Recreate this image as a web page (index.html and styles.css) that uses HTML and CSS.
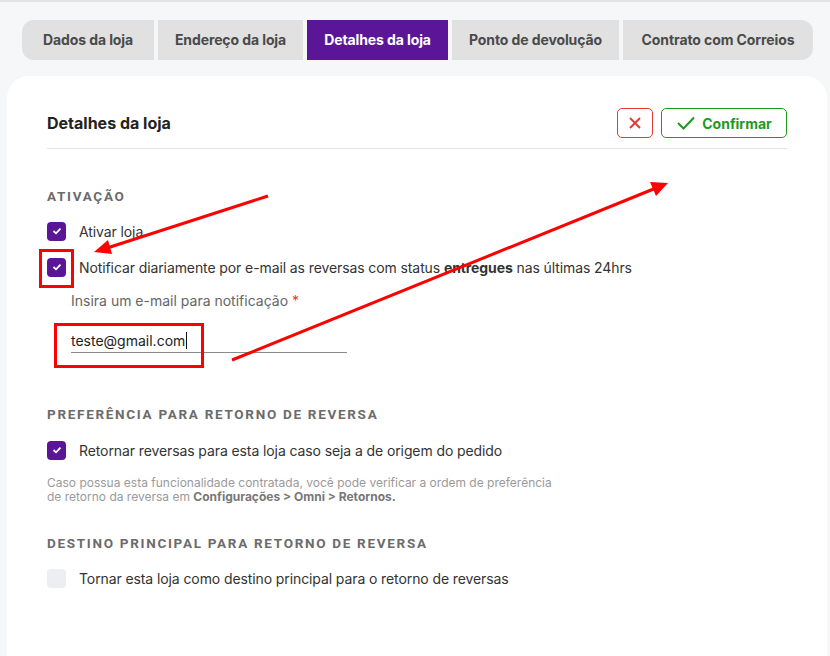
FILE: index.html
```html
<!DOCTYPE html>
<html lang="pt-BR">
<head>
    <meta charset="UTF-8">
    <meta name="viewport" content="width=device-width, initial-scale=1.0">
    <title>Detalhes da loja</title>
    <link rel="stylesheet" href="styles.css">
</head>
<body>
<div class="page">
    <!-- abas -->
    <div class="tabs">
        <div class="tab first">Dados da loja</div>
        <div class="tab">Endereço da loja</div>
        <div class="tab active">Detalhes da loja</div>
        <div class="tab">Ponto de devolução</div>
        <div class="tab last">Contrato com Correios</div>
    </div>

    <!-- card -->
    <div class="card">
        <div class="card-header">
            <h3>Detalhes da loja</h3>
            <div class="actions">
                <button class="btn-cancel">
                    <svg width="14" height="14" viewBox="0 0 14 14"><path d="M2 2 L12 12 M12 2 L2 12" stroke="#e53935" stroke-width="2" fill="none"/></svg>
                </button>
                <button class="btn-confirm">
                    <svg width="20" height="16" viewBox="0 0 20 16"><path d="M2 8 L7.5 13.5 L18 2.5" stroke="#1e9a1e" stroke-width="2" fill="none"/></svg>
                    Confirmar
                </button>
            </div>
        </div>

        <div class="section first">
            <h4>Ativação</h4>
            <label class="check-row">
                <span class="box checked"><svg width="10" height="8" viewBox="0 0 10 8"><path d="M1.5 4 L4 6.3 L8.5 1.7" stroke="#fff" stroke-width="1.8" fill="none"/></svg></span>
                Ativar loja
            </label>
            <label class="check-row">
                <span class="box checked"><svg width="10" height="8" viewBox="0 0 10 8"><path d="M1.5 4 L4 6.3 L8.5 1.7" stroke="#fff" stroke-width="1.8" fill="none"/></svg></span>
                <span>Notificar diariamente por e-mail as reversas com status <b>entregues</b> nas últimas 24hrs</span>
            </label>
            <div class="field">
                <div class="field-label">Insira um e-mail para notificação <span class="req">*</span></div>
                <div class="field-input"><span>teste@gmail.com</span><span class="caret"></span></div>
            </div>
        </div>

        <div class="section second">
            <h4>Preferência para retorno de reversa</h4>
            <label class="check-row">
                <span class="box checked"><svg width="10" height="8" viewBox="0 0 10 8"><path d="M1.5 4 L4 6.3 L8.5 1.7" stroke="#fff" stroke-width="1.8" fill="none"/></svg></span>
                Retornar reversas para esta loja caso seja a de origem do pedido
            </label>
            <p class="hint">Caso possua esta funcionalidade contratada, você pode verificar a ordem de preferência<br>de retorno da reversa em <b>Configurações &gt; Omni &gt; Retornos.</b></p>
        </div>

        <div class="section last">
            <h4>Destino principal para retorno de reversa</h4>
            <label class="check-row">
                <span class="box"></span>
                Tornar esta loja como destino principal para o retorno de reversas
            </label>
        </div>
    </div>

    <!-- marcações em vermelho -->
    <div class="mark mark-check"></div>
    <div class="mark mark-input"></div>
    <svg class="arrows" width="830" height="656" viewBox="0 0 830 656">
        <line x1="268" y1="194" x2="104" y2="247" stroke="#f00" stroke-width="3"/>
        <polygon points="94,250 108,238 112,252" fill="#f00"/>
        <line x1="232" y1="358" x2="656" y2="186" stroke="#f00" stroke-width="3"/>
        <polygon points="668,181 650,180 656,194" fill="#f00"/>
    </svg>
</div>
</body>
</html>
```

FILE: styles.css
```css
body {
    margin: 0;
    background: #f6f7f9;
    font-family: "Inter", "DejaVu Sans", sans-serif;
    color: #333;
}

.page {
    position: relative;
    width: 830px;
    height: 656px;
    overflow: hidden;
    border-top: 2px solid #e3e4e6;
    box-sizing: border-box;
}

/* abas */
.tabs {
    display: flex;
    gap: 4px;
    padding: 18px 0 0 22px;
}

.tab {
    height: 40px;
    line-height: 40px;
    text-align: center;
    white-space: nowrap;
    background: #e1e1e1;
    color: #4a4a4a;
    font-size: 14px;
    font-weight: 700;
    letter-spacing: -0.1px;
}

.tab:nth-child(1) { width: 132px; }
.tab:nth-child(2) { width: 145px; }
.tab:nth-child(3) { width: 141px; }
.tab:nth-child(4) { width: 167px; }
.tab:nth-child(5) { width: 190px; }

.tab.first {
    border-radius: 12px 0 0 12px;
}

.tab.last {
    border-radius: 0 12px 12px 0;
}

.tab.active {
    background: #5b1698;
    color: #fff;
}

/* card */
.card {
    margin: 16px 3px 0 7px;
    background: #fff;
    border-radius: 22px;
    padding: 32px 40px 80px 40px;
}

.card-header {
    display: flex;
    justify-content: space-between;
    align-items: center;
    padding-bottom: 10px;
    border-bottom: 1px solid #e2e2e2;
}

.card-header h3 {
    margin: 0;
    font-size: 16px;
    font-weight: 700;
    color: #222;
}

.actions {
    display: flex;
    gap: 8px;
}

.actions button {
    height: 30px;
    background: #fff;
    border-radius: 5px;
    font-family: inherit;
    cursor: pointer;
    display: flex;
    align-items: center;
    justify-content: center;
}

.btn-cancel {
    width: 36px;
    border: 1px solid #e53935;
}

.btn-confirm {
    width: 126px;
    border: 1px solid #1e9a1e;
    color: #1e9a1e;
    font-size: 14px;
    font-weight: 700;
    gap: 6px;
}

/* secoes */
.section.first {
    margin-top: 40px;
}

.section.second {
    margin-top: 54px;
}

.section.last {
    margin-top: 32px;
}

.section h4 {
    margin: 0 0 17px;
    font-family: "Roboto", sans-serif;
    font-size: 13.5px;
    line-height: 15px;
    font-weight: 700;
    letter-spacing: 1.7px;
    text-transform: uppercase;
    color: #6b6b6b;
}

.second h4 {
    margin-bottom: 18px;
}

.check-row {
    display: flex;
    align-items: center;
    gap: 13px;
    font-size: 14px;
    letter-spacing: -0.1px;
    color: #333;
    height: 20px;
    margin-bottom: 16px;
}

.check-row b {
    font-weight: 700;
}

.box {
    width: 19px;
    height: 19px;
    border-radius: 4px;
    background: #eceef2;
    display: flex;
    align-items: center;
    justify-content: center;
    flex-shrink: 0;
}

.box.checked {
    background: #5b1698;
}

.field {
    padding-left: 24px;
    margin-top: -1px;
}

.field-label {
    font-size: 14px;
    color: #666;
}

.req {
    color: #e53935;
}

.field-input {
    width: 276px;
    margin-top: 23px;
    padding-bottom: 3px;
    border-bottom: 1px solid #8a8a8a;
    font-size: 14px;
    color: #222;
    display: flex;
    align-items: center;
}

.caret {
    width: 1px;
    height: 17px;
    background: #111;
    margin-left: 1px;
}

.hint {
    margin: 0;
    font-size: 12px;
    line-height: 14px;
    color: #9a9a9a;
}

.hint b {
    color: #777;
}

/* marcacoes */
.mark {
    position: absolute;
    border: 3px solid #f00;
    box-sizing: border-box;
}

.mark-check {
    left: 39px;
    top: 247px;
    width: 35px;
    height: 39px;
}

.mark-input {
    left: 54px;
    top: 321px;
    width: 150px;
    height: 45px;
}

.arrows {
    position: absolute;
    left: 0;
    top: 0;
    pointer-events: none;
}
```
